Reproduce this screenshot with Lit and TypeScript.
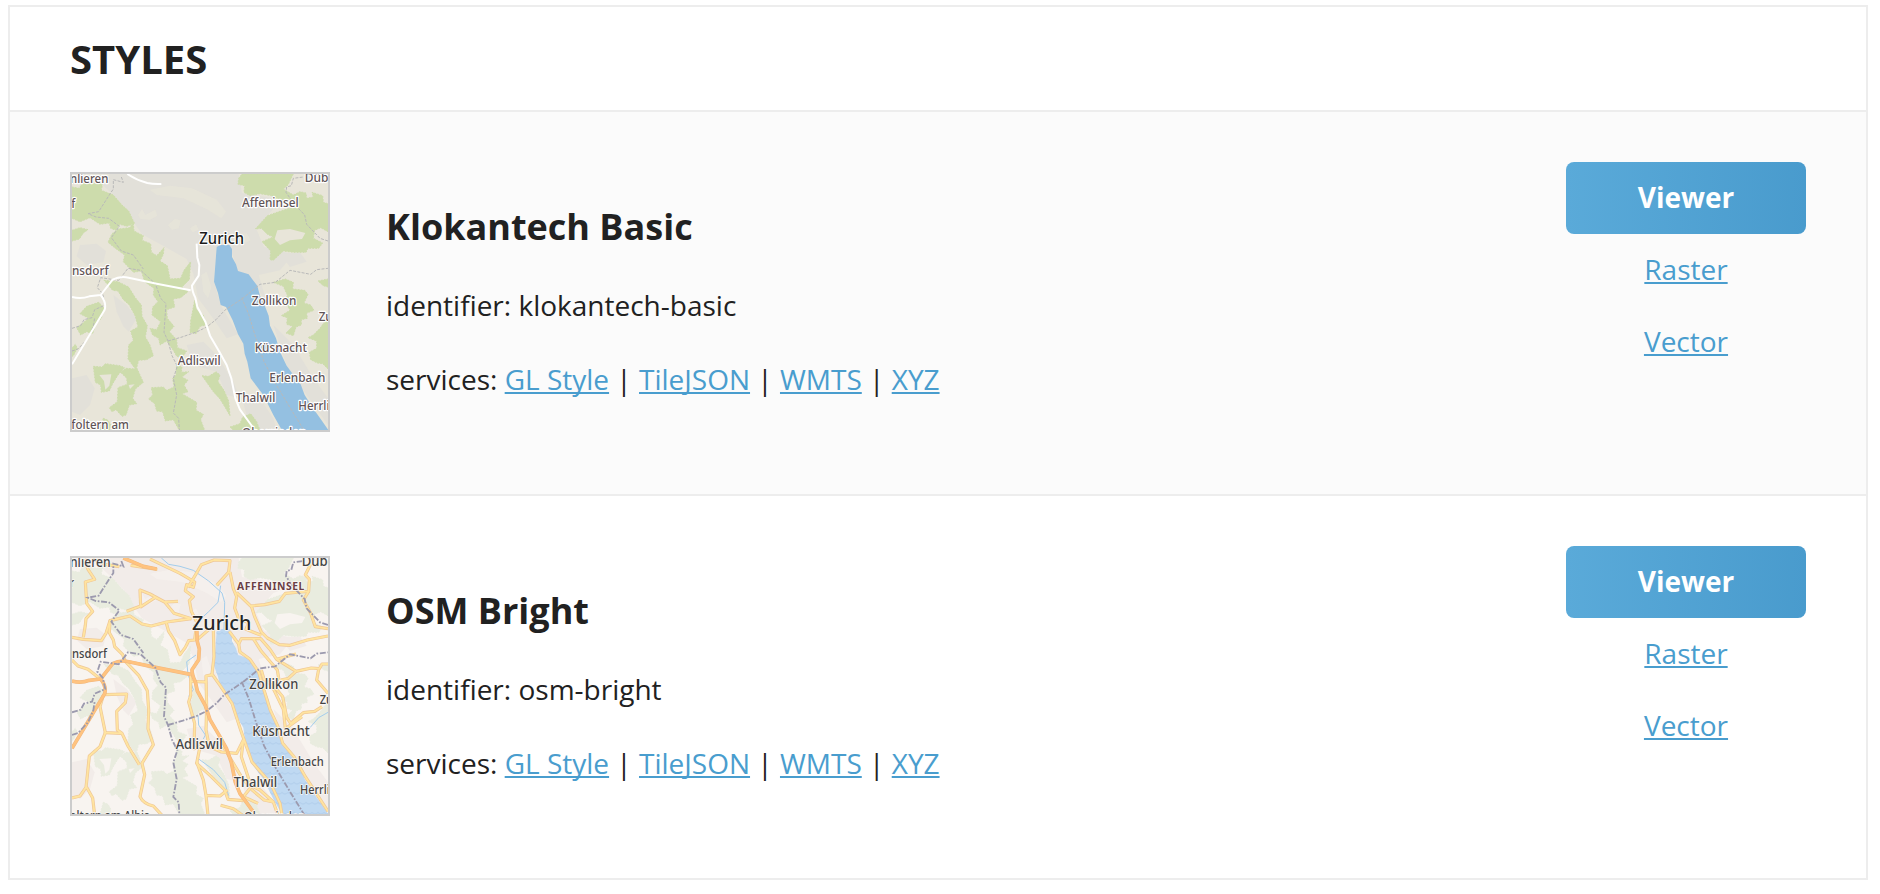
import { LitElement, html, svg, css } from "lit";
import { customElement, property } from "lit/decorators.js";

type Label = [text: string, x: number, y: number, width: number, size: number, kind?: string];
interface StyleItem { id: string; name: string; bright: boolean; }

const WATER = "M470 246 L480 240 L508 240 L516 252 L516 276 L528 298 L534 318 L566 328 L578 344 L592 362 L600 392 L612 416 L626 452 L630 482 L648 520 L660 560 L680 602 L702 632 L722 658 L734 690 L758 728 L782 762 L806 796 L666 796 L640 750 L610 690 L572 640 L562 590 L554 566 L550 536 L534 508 L518 466 L498 426 L482 420 L474 384 L462 350 L465 312 Z";
const LAKE_BORDER = "M545 398 L566 448 L588 520 L612 590 L648 658 L690 728 L732 796";
const BORDERS = [
  "M36 490 L62 482 L72 464 L96 458 L104 434 L136 420 L128 386 L112 368 L122 338 L176 346 L204 310 L242 316 L286 356 L302 400 L318 416 L312 502 L324 528 L336 572 L352 604 L340 640 L350 690 L340 744 L356 760 L358 796",
  "M184 36 L190 52 L160 44 L160 72 L144 96 L116 140 L84 146 L108 156 L146 160 L178 184 L154 218 L184 258 L220 270 L250 312",
  "M324 528 L366 516 L412 500 L440 486 L468 464 L494 436 L548 400 L600 358 L646 352 L690 316 L752 328 L770 314 L804 310",
  "M804 228 L780 220 L740 178 L734 150 L700 114 L678 82 L680 66 L694 62 L700 40 L730 36",
  "M36 558 L54 552 L84 520 L100 484 L104 458",
];
const FOREST = [
  "M36 66 L58 70 L70 48 L110 58 L128 54 L124 76 L160 90 L186 120 L206 138 L224 176 L200 184 L180 178 L168 196 L152 190 L148 174 L120 178 L90 158 L60 170 L36 160 Z",
  "M36 196 L60 188 L84 194 L70 204 L58 222 L36 228 Z",
  "M156 206 L176 192 L208 188 L220 176 L222 198 L250 212 L246 226 L272 236 L274 262 L290 272 L312 248 L310 268 L300 288 L322 302 L330 342 L362 340 L372 316 L392 290 L388 344 L366 366 L384 380 L362 398 L340 402 L344 426 L320 434 L322 460 L342 484 L328 500 L350 524 L352 548 L380 558 L366 578 L350 574 L340 556 L320 528 L300 540 L296 520 L278 510 L270 490 L290 494 L302 470 L276 450 L278 426 L294 410 L280 390 L282 370 L254 350 L244 318 L220 322 L190 290 L194 270 L166 250 L144 232 Z",
  "M132 346 L174 350 L206 366 L226 398 L244 420 L246 454 L262 482 L256 516 L270 540 L280 572 L260 584 L236 586 L230 608 L250 652 L226 672 L218 700 L230 716 L208 720 L198 750 L186 754 L168 734 L156 740 L148 728 L172 710 L174 668 L202 658 L200 640 L182 622 L198 610 L226 612 L204 582 L206 540 L220 526 L212 498 L234 486 L226 454 L208 420 L190 404 L174 378 L158 376 Z",
  "M100 604 L126 606 L136 596 L180 602 L194 608 L174 630 L158 656 L148 678 L124 682 L122 660 L106 652 Z",
  "M60 446 L80 424 L116 412 L132 428 L124 460 L106 478 L98 506 L80 500 L62 510 L50 488 L64 478 L86 460 Z",
  "M36 548 L46 538 L52 550 L40 572 L36 574 Z",
  "M350 598 L366 606 L364 622 L386 620 L366 636 L384 646 L372 660 L384 680 L366 686 L410 712 L408 736 L430 748 L422 764 L434 796 L358 796 L340 764 L316 768 L308 740 L290 738 L284 716 L266 702 L278 690 L274 668 L310 666 L320 676 L342 666 L338 640 L348 630 Z",
  "M392 468 L404 406 L410 434 L430 450 L438 480 L420 484 L408 506 L390 502 Z",
  "M426 632 L446 634 L468 620 L480 630 L474 650 L492 676 L506 708 L510 752 L496 728 L480 702 L460 680 Z",
  "M510 786 L540 776 L548 756 L572 746 L590 770 L600 796 L520 796 Z",
  "M536 40 L546 27 L700 27 L684 60 L670 72 L700 90 L720 80 L738 84 L740 100 L760 96 L756 82 L788 92 L790 112 L804 116 L804 200 L782 188 L764 196 L760 220 L788 234 L776 250 L744 250 L738 262 L700 262 L670 258 L640 286 L630 284 L632 258 L606 230 L640 216 L622 208 L604 190 L586 192 L622 152 L656 140 L700 126 L690 114 L640 104 L636 92 L600 86 L570 92 L552 82 L554 62 L534 58 Z",
  "M640 352 L676 342 L700 352 L698 372 L734 376 L744 388 L732 414 L752 420 L762 436 L740 444 L742 460 L724 464 L724 480 L708 486 L700 512 L678 504 L698 484 L680 478 L682 458 L664 452 L690 436 L676 410 L682 390 L670 364 Z",
  "M774 348 L804 342 L804 366 L790 362 Z",
  "M804 456 L780 490 L760 510 L744 518 L770 528 L770 550 L748 562 L752 584 L772 594 L788 596 L804 612 Z",
  "M130 760 L144 766 L152 780 L148 796 L120 796 Z",
];
const CLEARINGS = [
  "M118 630 L154 628 L148 662 L136 674 L132 648 Z",
  "M652 196 L690 192 L736 204 L726 222 L690 226 L660 240 L644 222 Z",
  "M206 660 L224 658 L210 672 Z",
];
const TOWN = [
  "M150 27 L536 27 L546 84 L700 110 L640 132 L588 190 L612 246 L700 268 L660 316 L596 330 L626 430 L590 362 L534 318 L508 240 L470 246 L462 350 L482 420 L534 508 L500 520 L452 450 L414 400 L400 326 L380 282 L316 246 L246 208 L224 176 L206 138 L160 90 L128 60 Z",
  "M60 240 L110 236 L138 258 L130 292 L80 300 L50 274 Z",
  "M160 390 L200 420 L230 460 L206 500 L190 484 L170 440 Z",
  "M36 640 L80 630 L104 670 L90 720 L60 750 L36 740 Z",
  "M380 540 L430 530 L470 570 L520 650 L540 700 L500 690 L470 620 L400 600 Z",
  "M546 700 L600 700 L640 760 L650 796 L600 796 L560 750 Z",
  "M640 480 L700 540 L760 640 L804 700 L804 780 L740 690 L680 602 Z",
  "M660 268 L720 262 L740 290 L690 306 Z",
];
const FIELDS = [
  "M270 74 L330 62 L396 70 L470 104 L498 140 L484 160 L440 132 L370 100 L290 90 Z",
  "M234 150 L246 132 L256 150 L286 134 L292 152 L270 164 L242 162 Z",
  "M324 180 L344 162 L362 166 L356 190 L336 194 Z",
  "M390 190 L408 178 L416 194 L398 202 Z",
  "M538 208 L560 204 L572 226 L556 234 Z",
  "M424 330 L440 320 L454 366 L444 400 L430 380 Z",
];

const LABELS_BASIC: Label[] = [
  ["nlieren", 30, 54, 115, 38], ["Dübendorf", 734, 51, 186, 38], ["f", 34, 130, 12, 38],
  ["Affeninsel", 546, 126, 170, 38], ["Zurich", 418, 237, 134, 47, "city"],
  ["nsdorf", 36, 329, 110, 38], ["Zollikon", 575, 420, 134, 38], ["Zumikon", 776, 467, 148, 38],
  ["Küsnacht", 584, 560, 157, 38], ["Adliswil", 353, 599, 129, 38], ["Erlenbach", 628, 651, 168, 38],
  ["Thalwil", 527, 711, 119, 38], ["Herrliberg", 715, 736, 171, 38], ["foltern am", 34, 793, 173, 38],
  ["Oberrieden", 546, 816, 193, 38],
];
const LABELS_BRIGHT: Label[] = [
  ["nlieren", 30, 51, 122, 41], ["Dübendorf", 725, 48, 204, 41], ["r", 30, 112, 12, 36],
  ["AFFENINSEL", 531, 120, 202, 31, "district"], ["Zurich", 396, 240, 178, 62, "city"],
  ["nsdorf", 36, 325, 105, 36], ["Zollikon", 568, 418, 147, 42], ["Zumikon", 779, 462, 140, 36],
  ["Küsnacht", 577, 558, 172, 42], ["Adliswil", 347, 598, 141, 42], ["Erlenbach", 632, 648, 159, 36],
  ["Thalwil", 521, 710, 131, 42], ["Herrliberg", 720, 733, 162, 36], ["Affoltern am Albis", -16, 810, 284, 38],
  ["Oberrieden", 552, 813, 184, 38],
];

const MOTORWAY = [
  "M36 396 C58 402 72 400 88 394 L122 390 L158 344 Q180 332 206 338 L290 356 L392 376",
  "M36 598 L134 434 Q140 412 122 390",
];
const A3 = "M410 236 L412 278 L418 300 L416 332 L396 362 Q396 378 406 398 L412 426 L436 470 L450 512 L478 560 L500 600 L514 640 L526 700 L540 734 L578 786";
const ROADS = [
  "M74 27 L84 58 L104 88 L76 96 L80 160 L98 184 L78 206 L76 226 L70 262",
  "M36 262 L70 268 L124 272 L138 250 L150 212 L210 198 L246 222 L274 228 L320 216 L394 206",
  "M36 330 L54 348 L84 358 L122 388",
  "M150 212 L148 248 L160 270 L164 290 L188 314 L196 334 L236 376 L262 422 L266 480 L264 536 L280 584 L246 640 L254 674 L240 740 Q250 762 280 768 L306 796",
  "M200 184 L242 168 L240 120 L270 132 L314 156 L354 154 M240 172 L286 142 L314 156 L342 190 L394 206",
  "M270 27 L360 70 L404 96 L400 112 L380 104 L376 122 L400 140 L388 152 L394 184 L410 216",
  "M384 112 L408 72 L424 44 L462 30 L510 32 L506 66 L470 106 M510 66 L520 116 L530 140 L524 174 L536 206",
  "M530 128 L572 168 L614 164 L658 154 L676 130 L720 126 L746 124 L748 88 L736 74 L760 27",
  "M574 168 L584 200 L604 246 L622 264 L658 284 L690 286 L742 270 L804 258",
  "M536 206 L566 218 L558 238 L604 256 M804 236 L766 230 L752 190 L730 150 L746 124",
  "M508 244 L536 282 L544 266 L602 266 L630 298 L650 328 L708 364 L754 354 L778 356 L786 342 L804 342",
  "M536 282 L540 306 L570 328 L596 366 L612 420 L630 478 L654 530 L668 580 L702 620 L736 680 L804 784",
  "M580 266 L604 304 L652 360 L656 384 L640 406 L668 440 L680 502 L692 520 L730 488 L764 484 L786 470 M604 360 L612 388 L634 404 L670 478 L676 536 L726 500",
  "M708 364 L684 386 L662 390 M708 312 L650 328 M776 358 L770 390 L804 430",
  "M460 240 L462 320 L456 372 L480 406 L516 460 L542 540 L556 580 L576 636 L632 700 L660 760 L666 796",
  "M410 220 L404 270 L386 272 L376 292 L360 314 L344 272 L326 244 L318 216 M410 270 L450 236",
  "M392 376 L392 436 L386 456 L404 520 L402 596 L420 590 L410 640 L454 680 L494 720 L504 748 L550 752",
  "M458 374 L438 378 L440 470 L438 540 L448 590 L484 606 L530 610 L550 570 L544 620 L574 710 L550 740 L594 760 M392 394 L440 396",
  "M490 590 L520 640 L544 680 L560 700 L600 720 L640 756 L654 796 M574 718 L612 750 L640 756",
  "M410 636 L430 690 L438 736 L444 796 M438 736 L480 738 L502 720",
  "M134 434 L200 432 L196 458 L170 484 L172 540 L186 550 L204 588 L238 644 M130 436 L120 470 L136 548 L184 550",
  "M136 548 L120 590 L88 618 L82 676 L78 712 L60 738 L36 744 M80 712 L98 744 L104 796",
  "M96 27 L140 44 L178 50 M212 46 L292 58 M482 766 L520 776 L548 796",
];
const STREAMS = [
  "M304 27 L326 46 L360 52 L400 64 L446 96 L486 132 L494 160 L492 240",
  "M400 230 L446 188 L474 160 L482 110", "M408 318 L380 338 L384 376 L400 422 L386 442",
  "M414 498 L416 528 L436 558 L430 570 M416 630 L460 662 L494 700 L506 740", "M750 536 L776 506 L804 490",
];

@customElement("map-preview")
export class MapPreview extends LitElement {
  @property({ type: Boolean }) bright = false;

  static styles = css`
    :host { display: block; width: 256px; height: 256px; border: 2px solid #ccc; }
    .map { display: block; width: 256px; height: 256px; overflow: hidden; }
    .forest { fill: #cddcac; stroke: #cddcac; stroke-width: 3; stroke-dasharray: 5 4; }
    .land { fill: #e8e5d9; }
    .town { fill: #e2e0d9; }
    .field { fill: #e8e5d9; opacity: .7; }
    .water { fill: #94c0e1; }
    .boundary { fill: none; stroke: #b9b9b9; stroke-width: 3; stroke-dasharray: 9 4; }
    .road { fill: none; stroke: #fff; stroke-width: 6; stroke-linejoin: round; }
    .a3 { fill: none; stroke: #fff; stroke-width: 6; stroke-linejoin: round; }
    .bright .forest { fill: #e9ecdf; stroke: #e9ecdf; }
    .bright .land { fill: #f8f4f0; }
    .bright .town { fill: #f2ece9; }
    .bright .field { fill: #f7f2ee; }
    .bright .water { fill: #bfd9f2; }
    .bright .boundary { stroke: #9c9aae; stroke-width: 5.5; stroke-dasharray: 18 5 5 5; }
    .wave { fill: none; stroke: #b5d1ed; stroke-width: 4; }
    .stream { fill: none; stroke: #a3cdec; stroke-width: 3; }
    .casing { fill: none; stroke: #efc796; stroke-width: 9.5; stroke-linejoin: round; }
    .street { fill: none; stroke: #ffe4a0; stroke-width: 5.5; stroke-linejoin: round; }
    .bright .road, .bright .a3 { stroke: #ffc37f; stroke-width: 8; }
    .edge { fill: none; stroke: #f0b67e; stroke-width: 11; stroke-linejoin: round; }
    text {
      font-family: "Noto Sans", "Open Sans", sans-serif; font-weight: 500; fill: #5f5356;
      stroke: #fff; stroke-width: 7; stroke-linejoin: round; paint-order: stroke;
    }
    .city { fill: #1c1c1c; }
    .bright text { fill: #444; stroke: #fbf8f5; stroke-width: 5; }
    .bright .city { fill: #262626; }
    .bright .district { font-weight: 700; fill: #6a3f45; }
  `;

  private lines(paths: string[], cls: string) {
    return paths.map((d) => svg`<path class=${cls} d=${d} />`);
  }

  render() {
    const b = this.bright;
    const labels = b ? LABELS_BRIGHT : LABELS_BASIC;
    return html`
      <svg class="map ${b ? "bright" : ""}" viewBox="36 ${b ? 24 : 27} 768 768" aria-hidden="true">
        <defs>
          <pattern id="waves" width="36" height="30" patternUnits="userSpaceOnUse">
            <path class="wave" d="M0 10 Q9 20 18 10 Q27 20 36 10" />
          </pattern>
        </defs>
        <rect class="land" x="30" y="20" width="790" height="790" />
        <g transform="translate(0 ${b ? -3 : 0})">
          ${this.lines(TOWN, "town")}${this.lines(FIELDS, "field")}
          ${this.lines(FOREST, "forest")}${this.lines(CLEARINGS, "land")}
          <path class="water" d=${WATER} />
          ${b ? svg`<path d=${WATER} fill="url(#waves)" />${this.lines(STREAMS, "stream")}` : ""}
          ${b ? "" : this.lines([...BORDERS, LAKE_BORDER], "boundary")}
        </g>
        ${b ? svg`${this.lines(ROADS, "casing")}${this.lines(ROADS, "street")}` : ""}
        <g transform="translate(0 ${b ? -3 : 0})">
          ${b ? this.lines([...MOTORWAY, A3, "M190 27 L250 52 L290 60"], "edge") : ""}
          ${this.lines(MOTORWAY, "road")}<path class="a3" d=${A3} />
          ${this.lines([b ? "M190 27 L250 52 L290 60" : "M202 27 Q230 46 262 54 Q280 58 304 57"], "road")}
          ${b ? this.lines([...BORDERS, LAKE_BORDER], "boundary") : ""}
        </g>
        ${labels.map(([t, x, y, w, s, k]) => svg`
          <text class=${k ?? ""} x=${x} y=${y} font-size=${s} textLength=${w}
            lengthAdjust=${k === "district" ? "spacing" : "spacingAndGlyphs"}>${t}</text>`)}
      </svg>`;
  }
}

@customElement("app-root")
export class AppRoot extends LitElement {
  static styles = css`
    :host {
      display: block; padding: 5px 12px 14px 8px; box-sizing: border-box; height: 894px;
      background: #fff; color: #212121; font: 28px/38px "Open Sans", sans-serif;
    }
    .box { border: 2px solid #ededed; }
    .title { margin: 0; height: 103px; padding-left: 60px; font-size: 40px; line-height: 103px; font-weight: 700; }
    .item {
      display: flex; align-items: flex-start; height: 382px; box-sizing: content-box;
      padding: 0 60px; border-top: 2px solid #ededed;
    }
    .item:nth-of-type(odd) { background: #fbfbfb; }
    .thumb { margin: 60px 56px 0 0; }
    .details { flex: 1; padding-top: 89px; }
    .name { margin: 0; font-size: 36px; line-height: 52px; font-weight: 700; }
    .line { margin: 33px 0 0; }
    .line + .line { margin-top: 36px; }
    a { color: #499dce; text-decoration: underline 2px; text-underline-offset: 2px; text-decoration-skip-ink: none; }
    .actions { width: 240px; padding-top: 50px; display: flex; flex-direction: column; text-align: center; line-height: 70px; }
    .actions span { height: 72px; }
    .viewer {
      height: 72px; border-radius: 8px; color: #fff; font-weight: 700; text-decoration: none;
      background: linear-gradient(90deg, #5aaad9, #499bcd);
    }
  `;

  private items: StyleItem[] = [
    { id: "klokantech-basic", name: "Klokantech Basic", bright: false },
    { id: "osm-bright", name: "OSM Bright", bright: true },
  ];
  private services = ["GL Style", "TileJSON", "WMTS", "XYZ"];

  render() {
    return html`
      <main class="box">
        <h2 class="title">STYLES</h2>
        ${this.items.map((it) => html`
          <section class="item">
            <map-preview class="thumb" ?bright=${it.bright}></map-preview>
            <div class="details">
              <h3 class="name">${it.name}</h3>
              <p class="line">identifier: ${it.id}</p>
              <p class="line">services: ${this.services.map((s, i) => html`${i ? " | " : ""}<a href="#">${s}</a>`)}</p>
            </div>
            <div class="actions">
              <a class="viewer" href="#">Viewer</a>
              <span><a href="#">Raster</a></span>
              <span><a href="#">Vector</a></span>
            </div>
          </section>`)}
      </main>`;
  }
}
